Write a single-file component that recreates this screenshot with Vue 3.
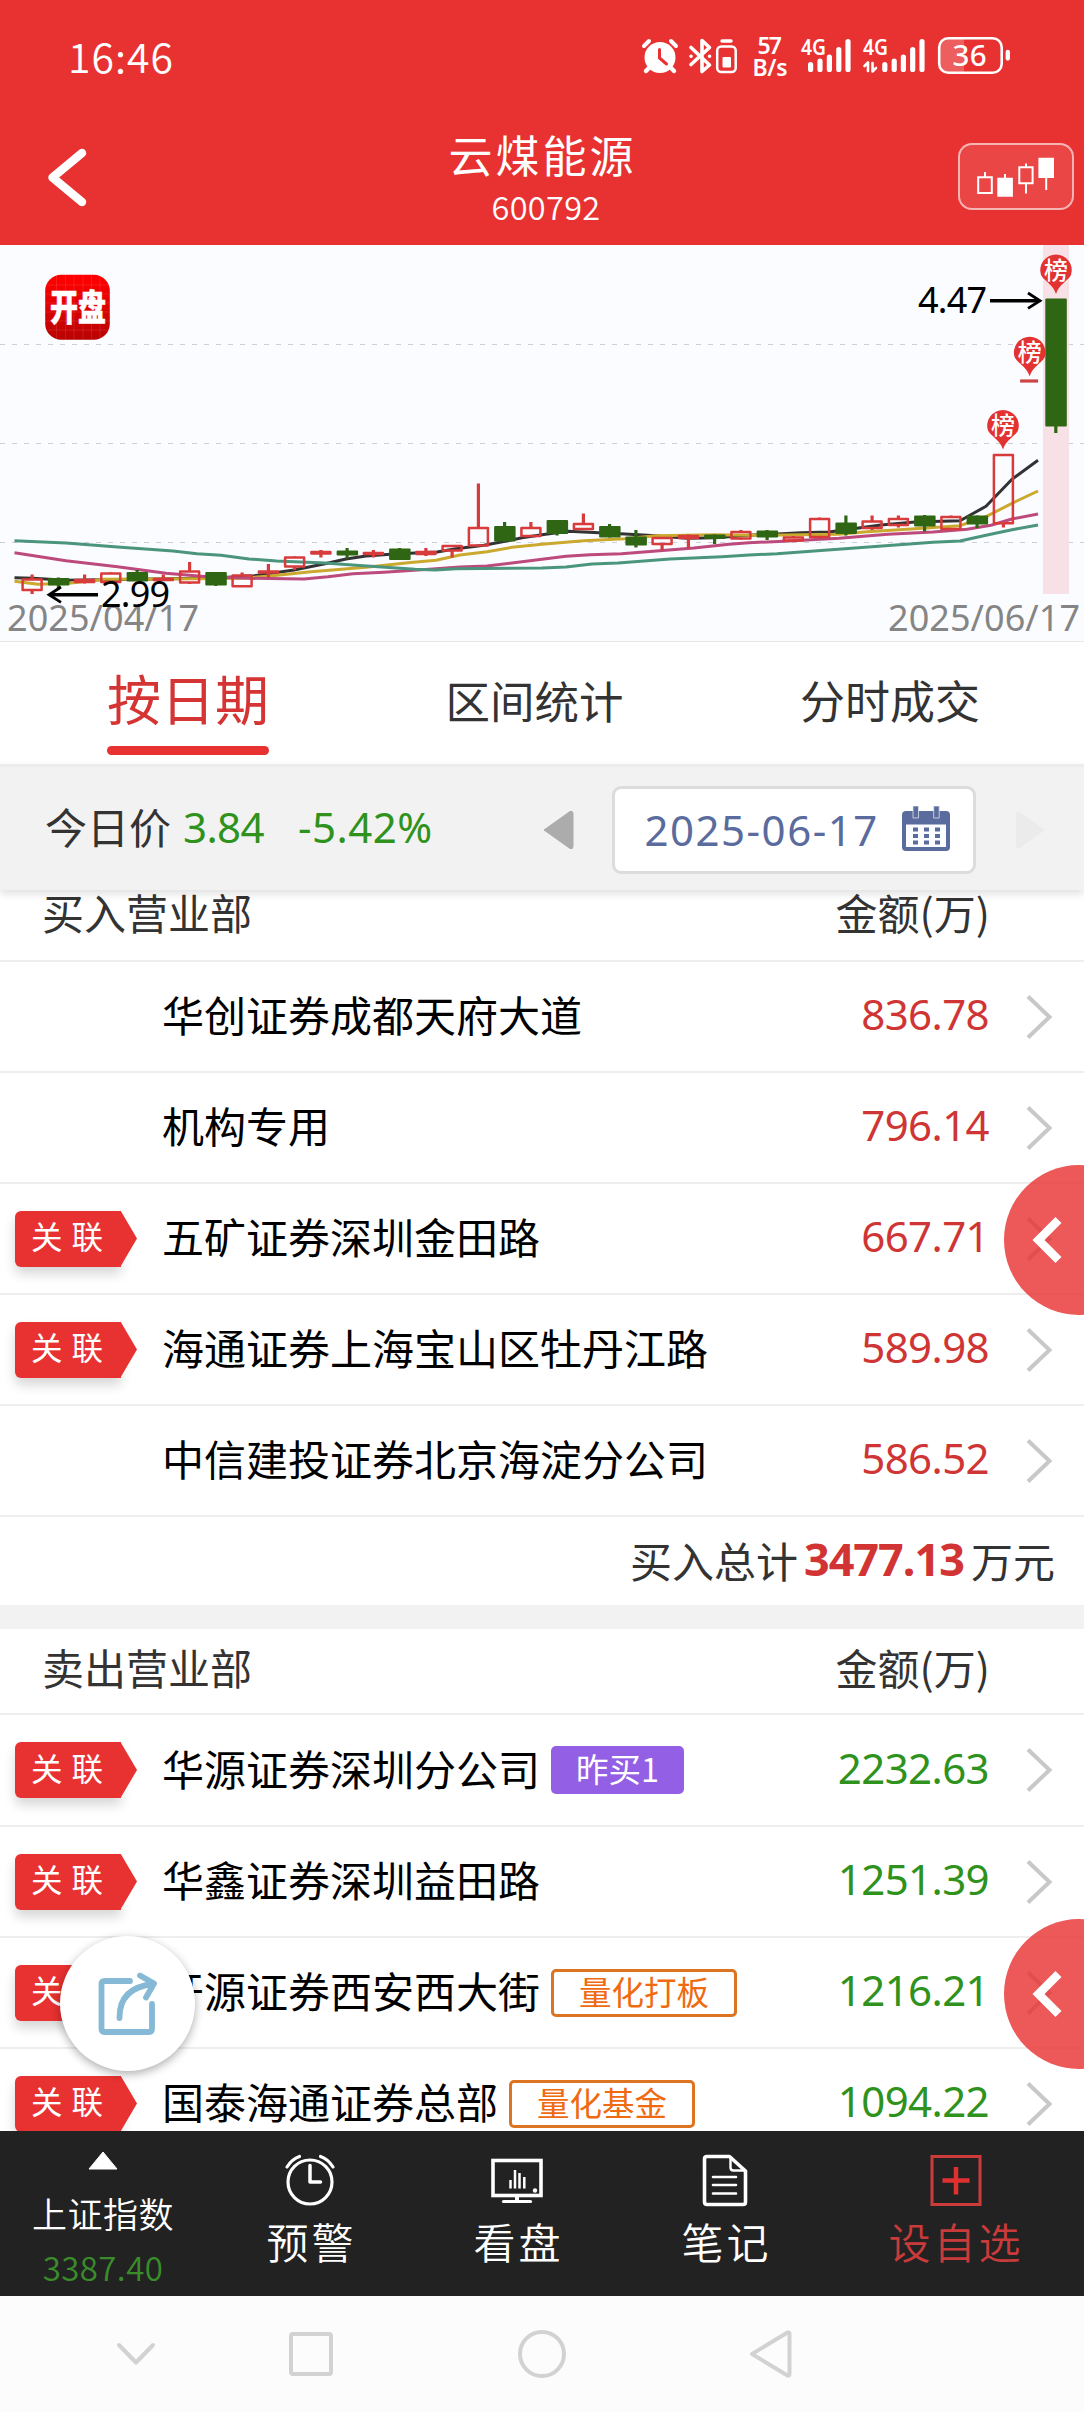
<script setup>
// Chart geometry: 40 daily candles, evenly spaced.
const STEP = 26.25
const FIRST = 32.1
const raw = [
  ['r', 334.5, 345, 329.5, 349], ['g', 334, 339.5, 332.5, 344.5], ['r', 335, 337, 329.5, 338.5], ['r', 328.5, 337, 327.5, 337],
  ['g', 328, 335.5, 325, 335.5], ['r', 334, 335, 329.5, 336], ['r', 326.5, 337.5, 317, 339], ['g', 328, 339.5, 327.5, 341],
  ['r', 330.5, 341.3, 327.5, 341], ['r', 326.5, 327.5, 319, 332.5], ['r', 312.5, 321.5, 311.5, 325], ['r', 307, 308.5, 305, 312.5],
  ['g', 306.5, 309.5, 303, 313.5], ['r', 308, 309, 305, 312.5], ['g', 304.5, 314, 303, 315], ['r', 307, 309, 303, 311],
  ['r', 301, 305.5, 300, 312.5], ['r', 283, 300.5, 238.5, 300.5], ['g', 282, 295.5, 277, 296.5], ['r', 283, 291, 277, 291],
  ['g', 276, 288, 276, 290.5], ['r', 279, 284, 268.5, 285], ['g', 282, 291.5, 279, 292.5], ['g', 292.5, 299.5, 285, 302.5],
  ['r', 293, 299, 292, 305], ['r', 291, 293, 289.5, 303.5], ['g', 290.5, 293, 289.5, 299], ['r', 287, 293.5, 285, 294.5],
  ['g', 286.5, 291.5, 285, 295], ['r', 292.5, 295.5, 291, 296.5], ['r', 274, 292, 272.5, 293.5], ['g', 278.5, 288, 270.5, 290.5],
  ['r', 276.5, 283, 270.5, 285], ['r', 274, 280, 270.5, 282.5], ['g', 271.5, 280.5, 270, 286.5], ['r', 272, 284, 270.5, 285],
  ['g', 271.5, 278.5, 270.5, 283], ['r', 210, 278.3, 210, 282.5], ['f', 136, 136, 136, 136], ['g', 54.5, 180.5, 54.5, 188],
]
const candles = raw.map(([kind, top, bottom, high, low], i) => ({ kind, top, bottom, high, low, x: +(FIRST + i * STEP).toFixed(1) }))

const averages = [
  { color: '#333333', points: '14.5,332.7 33,333.3 66,335.3 138,334.3 214,333 254,330.7 294,325 325,318.7 346,314 366,311 394,309 437,307 456,303.7 484,300.3 505,296.3 522,292.7 542,289.7 568,286.3 599,287.7 625,289 656,290.7 687,293.3 715,292.7 749,290.3 801,287.7 829,287 853,283.7 881,280 915,277 960,275.7 986,261.3 1012,234.3 1038,215.3' },
  { color: '#cba92f', points: '14.5,336.3 38,339.3 69,338.3 104,334.3 166,334 242,333.3 270,331 311,326.7 366,322.3 408,317.7 436,315.3 460,310 487,306.7 512,302.3 542,299.3 583.5,295.7 625,293.7 656,290.7 715,289.7 749,290.3 784,290 839,289.3 867,286.7 915,283.7 960,280.7 986,271.7 1012,258.3 1038,246' },
  { color: '#bd4a7c', points: '14.5,307.7 66,315.7 117.5,321.7 166,328.3 207,331.7 249,333.3 304,334 328,331.7 353,328.7 384,327.3 429,324.3 460,322 487,321 512,318 542,314.3 566,311.3 590,309.7 621.5,308.7 659.5,305.7 694,303 729,299.3 749,297.7 784,296.3 839,293.3 888,289.3 933,287 967,284.3 991,280.3 1012,274 1038,269' },
  { color: '#4b957c', points: '14.5,295.7 66,298 117.5,302 173,306 197,308.7 221,310.3 249,314 276.5,316 325,318 356,320.3 415,324.3 435.5,325 456,323.7 542,323 566,322 592,319 618,318 670,314 722,311.7 749,310 777,308.7 933,297.3 960,296 986,290.3 1012,284.7 1038,280' },
]
const pins = [{ x: 1056, y: 25 }, { x: 1029.7, y: 107.3 }, { x: 1003, y: 180.5 }]

const buyers = [
  { name: '华创证券成都天府大道', amount: '836.78' },
  { name: '机构专用', amount: '796.14' },
  { name: '五矿证券深圳金田路', amount: '667.71', linked: true },
  { name: '海通证券上海宝山区牡丹江路', amount: '589.98', linked: true },
  { name: '中信建投证券北京海淀分公司', amount: '586.52' },
]
const sellers = [
  { name: '华源证券深圳分公司', amount: '2232.63', linked: true, badge: '昨买1', tone: 'purple' },
  { name: '华鑫证券深圳益田路', amount: '1251.39', linked: true },
  { name: '开源证券西安西大街', amount: '1216.21', linked: true, badge: '量化打板', tone: 'orange' },
  { name: '国泰海通证券总部', amount: '1094.22', linked: true, badge: '量化基金', tone: 'orange' },
]
const groups = [
  { key: 'buy', title: '买入营业部', rows: buyers, total: '3477.13' },
  { key: 'sell', title: '卖出营业部', rows: sellers },
]
</script>

<template>
  <div class="screen">
    <header class="header">
      <div class="status">
        <span class="clock">16:46</span>
        <svg class="status-icons" width="380" height="50" viewBox="636 31 380 50">
          <g stroke="#fff" stroke-linecap="round" fill="none">
            <circle cx="660" cy="57.5" r="15.5" fill="#fff" stroke="none" />
            <path d="M644 46l5-5M676 46l-5-5" stroke-width="4" />
            <path d="M650 67l-4 4M670 67l4 4" stroke-width="4.5" />
            <path d="M659.5 49.500v8.500l7 6" stroke="#e83131" stroke-width="3" />
            <path d="M691 47.500l18.500 17.500-7.500 6.500v-31l7.500 7-18.500 17" stroke-width="3.600" stroke-linejoin="round" />
            <path d="M691 56.200h.1M709.500 56.200h.1" stroke-width="3.500" />
            <rect x="717.200" y="46.500" width="18.500" height="25.500" rx="4" stroke-width="2.500" />
            <path d="M722 41h9" stroke-width="3.400" />
            <rect x="722.500" y="57" width="8.500" height="10.500" rx="1" fill="#fff" stroke="none" />
            <path d="M810.600 64.500v5M820 61v8.500M829.400 57v12.500M838.800 49.500v20M848 41.500v28" stroke-width="5.200" />
            <path d="M884.800 64.500v5M894.200 61v8.500M903.400 57v12.500M912.700 49.500v20M922 41.500v28" stroke-width="5.200" />
            <path d="M864.500 66l3.500-3.500v8.500M872.500 63v8.500l3.500-3.500" stroke-width="2.600" stroke-linejoin="round" />
            <path d="M948 39h16v34h-16a8 8 0 0 1-8-8v-18a8 8 0 0 1 8-8z" fill="rgba(255,255,255,.22)" stroke="none" />
            <rect x="939.200" y="38.200" width="62.500" height="34.500" rx="9" stroke-width="2.600" />
            <path d="M1007.800 52v6.500" stroke-width="4.300" />
          </g>
          <g fill="#fff" class="status-text">
            <text x="757.500" y="54" font-size="23" textLength="24.500">57</text>
            <text x="752.500" y="75.500" font-size="23" textLength="35">B/s</text>
            <text x="801" y="55" font-size="22" textLength="25" lengthAdjust="spacingAndGlyphs">4G</text>
            <text x="863" y="55" font-size="22" textLength="25" lengthAdjust="spacingAndGlyphs">4G</text>
            <text x="952.500" y="65.500" font-size="29.500" textLength="34">36</text>
          </g>
        </svg>
      </div>
      <div class="titlebar">
        <svg class="back" width="46" height="64" viewBox="44 145 46 64"><path d="M82 153L52.500 177.500 82 202" fill="none" stroke="#fff" stroke-width="8.500" stroke-linecap="round" stroke-linejoin="round" /></svg>
        <div class="stock">
          <h1>云煤能源</h1>
          <span>600792</span>
        </div>
        <div class="kline">
          <svg width="82" height="42" viewBox="976 156 82 42" fill="none" stroke="#fff" stroke-width="2">
            <path d="M979.200 177.300h13.600v15.700h-13.600zM986 177v-5M1020.300 167.300h13.300v15.900h-13.300zM1027 167v-3.500M1027 183.500v10" />
            <path d="M999.300 178.800h13.600v16.900h-13.600zM1040.400 158.700h13.600v18.300h-13.600z" fill="#fff" />
            <path d="M1006 178v-4M1047.200 177v13" />
          </svg>
        </div>
      </div>
    </header>

    <svg class="chart" width="1084" height="396" viewBox="0 0 1084 396">
      <defs>
        <linearGradient id="logo" x1="0" y1="0" x2="0" y2="1"><stop offset=".1" stop-color="#fc0000" /><stop offset="1" stop-color="#b80303" /></linearGradient>
      </defs>
      <path d="M0 99.500h1084M0 198.500h1084M0 297.500h1084" stroke="#cdcfd6" stroke-dasharray="5 7" />
      <rect x="1043" y="0" width="26" height="349" fill="#f7e0e6" />
      <rect x="45.200" y="29.700" width="64.600" height="65" rx="16" fill="url(#logo)" />
      <path d="M56.500 30v64.500M65.500 30v64.500M74 30v64.500M83 30v64.500M91.500 30v64.500M100 30v64.500M45.500 40h64M45.500 49h64M45.500 58h64M45.500 67h64M45.500 76h64M45.500 85h64" stroke="#fff" stroke-opacity=".1" />
      <text class="logo-text" x="50" y="76" font-size="36" textLength="56" lengthAdjust="spacingAndGlyphs">开盘</text>
      <polyline v-for="a in averages" :key="a.color" :points="a.points" fill="none" :stroke="a.color" stroke-width="3" stroke-linejoin="round" />
      <g v-for="c in candles" :key="c.x">
        <template v-if="c.kind === 'r'">
          <path :d="`M${c.x} ${c.high}V${c.top}M${c.x} ${c.bottom}V${c.low}`" stroke="#d83b3b" stroke-width="3.200" />
          <rect :x="c.x - 9.500" :y="c.top" width="19" :height="c.bottom - c.top" fill="none" stroke="#d83b3b" stroke-width="2.500" stroke-linejoin="round" />
        </template>
        <template v-else-if="c.kind === 'g'">
          <path :d="`M${c.x} ${c.high}V${c.low}`" stroke="#2f6613" stroke-width="3.200" />
          <rect :x="c.x - 9.500" :y="c.top" width="19.500" :height="c.bottom - c.top" fill="#2f6613" stroke="#2f6613" stroke-width="2" stroke-linejoin="round" />
        </template>
        <path v-else :d="`M${c.x - 9.500} ${c.top}h18`" stroke="#cf4447" stroke-width="3.200" />
      </g>
      <g v-for="p in pins" :key="p.x">
        <path :d="`M${p.x - 15} ${p.y + 5}a15.800 15.600 0 1 1 30 0c-2 5-12 9-15 19c-3-10-13-14-15-19z`" fill="#e23332" />
        <text class="pin-text" :x="p.x" :y="p.y + 8.800" text-anchor="middle">榜</text>
      </g>
      <g class="chart-text" font-size="36">
        <text x="918" y="67.700" textLength="69">4.47</text>
        <text x="7" y="385.700" fill="#858585" textLength="192">2025/04/17</text>
        <text x="888" y="385.700" fill="#858585" textLength="192">2025/06/17</text>
        <text x="101" y="362" textLength="69">2.99</text>
      </g>
      <g fill="none" stroke="#000">
        <path d="M990 55.700h49M50 349.700h48" stroke-width="3.600" />
        <path d="M1028 48l12 7.700-12 7.700M61 342l-12 7.700 12 7.700" stroke-width="2.800" />
      </g>
    </svg>

    <nav class="tabs">
      <span class="tab active">按日期</span>
      <span class="tab">区间统计</span>
      <span class="tab last">分时成交</span>
    </nav>

    <section class="quote">
      <span class="label">今日价</span>
      <span class="num price">3.84</span>
      <span class="num change">-5.42%</span>
      <svg class="prev" width="32" height="42" viewBox="0 0 32 42"><path d="M2 21L28 2.500q3-1 3 2v33q0 3-3 2z" fill="#acacac" stroke="#acacac" stroke-linejoin="round" /></svg>
      <div class="date">
        <span class="num">2025-06-17</span>
        <svg width="48" height="46" viewBox="0 0 48 46">
          <rect y="5" width="48" height="40" rx="4" fill="#5a6b9d" />
          <path d="M4 18.500h40v22.500h-40z" fill="#fafcff" />
          <path d="M11 0h5.500v12h-5.500zM31.700 0h5.500v12h-5.500z" fill="#5a6b9d" stroke="#dfe3ee" stroke-width=".8" />
          <path d="M11 21.500h5v4h-5zm11 0h5v4h-5zm11 0h5v4h-5zM11 28h5v4h-5zm11 0h5v4h-5zm11 0h5v4h-5zM11 34.500h5v4h-5zm11 0h5v4h-5zm11 0h5v4h-5z" fill="#5a6b9d" />
        </svg>
      </div>
      <svg class="next" width="32" height="42" viewBox="0 0 32 42"><path d="M30 21L4 2.500q-3-1-3 2v33q0 3 3 2z" fill="#ebebeb" /></svg>
    </section>

    <main class="list">
      <section v-for="g in groups" :key="g.key" :class="g.key">
        <div class="head"><span>{{ g.title }}</span><span>金额(万)</span></div>
        <div v-for="r in g.rows" :key="r.name" class="row">
          <div class="tag-cell"><span v-if="r.linked" class="tag">关联</span></div>
          <span class="name">{{ r.name }}</span>
          <span v-if="r.badge" class="badge" :class="r.tone">{{ r.badge }}</span>
          <span class="num amount">{{ r.amount }}</span>
          <svg width="28" height="48" viewBox="0 0 28 48"><path d="M3 3.500L24.500 24 3 44.500" fill="none" stroke="#c8c8c8" stroke-width="4" /></svg>
        </div>
        <div v-if="g.total" class="total"><span>买入总计</span><b>{{ g.total }}</b><span>万元</span></div>
      </section>
    </main>

    <footer class="toolbar">
      <div class="item index">
        <svg width="30" height="19" viewBox="0 0 30 19"><path d="M15 1L29 18H1z" fill="#fff" stroke="#fff" stroke-linejoin="round" /></svg>
        <span>上证指数</span>
        <em>3387.40</em>
      </div>
      <div class="item">
        <svg width="52" height="54" viewBox="0 0 52 54" fill="none" stroke="#fff" stroke-width="3.200" stroke-linecap="round"><circle cx="26" cy="29" r="22" /><path d="M3 14Q8 6 15.500 3.500M49 14Q44 6 36.500 3.500" /><path d="M26 12.500V29h10.500" stroke-width="3.500" stroke-linejoin="round" /></svg>
        <span>预警</span>
      </div>
      <div class="item">
        <svg width="52" height="54" viewBox="0 0 52 54" fill="none" stroke="#fff"><rect x="2" y="7.500" width="48" height="35" stroke-width="3.600" /><path d="M26 43v5" stroke-width="4" /><path d="M12.500 48.500h27" stroke-width="3.200" stroke-linecap="round" /><path d="M19.500 27v8.500M24 17v18.500M28.500 20v15.500M33.300 24v11.500" stroke-width="2.500" /><circle cx="44" cy="37.500" r="2.200" fill="#fff" stroke="none" /></svg>
        <span>看盘</span>
      </div>
      <div class="item">
        <svg width="52" height="54" viewBox="0 0 52 54" fill="none" stroke="#fff" stroke-width="3.600" stroke-linejoin="round"><path d="M8 3.500h22.500L46.500 18v31q0 2.500-2.500 2.500H8q-2.500 0-2.500-2.500V6q0-2.500 2.500-2.500z" /><path d="M31.500 4v10.500q0 3 3 3h11" stroke-width="2.400" /><path d="M14 24h23M14 32h23M14 40.500h23" stroke-width="2.600" stroke-linecap="round" /></svg>
        <span>笔记</span>
      </div>
      <div class="item add">
        <svg width="52" height="54" viewBox="0 0 52 54" fill="none"><rect x="2" y="3.500" width="48" height="48" stroke="#cc3a3a" stroke-width="3" /><path d="M26 14v27.500M12.500 27.500h27" stroke="#e03030" stroke-width="4.500" /></svg>
        <span>设自选</span>
      </div>
    </footer>

    <div class="sysnav">
      <svg width="1084" height="60" viewBox="0 2324 1084 60" fill="none" stroke="#d2d2d2" stroke-width="4" stroke-linecap="round" stroke-linejoin="round">
        <path d="M119 2345l17 17.500 17-17.500" />
        <rect x="291" y="2334" width="40" height="40" rx="2" />
        <circle cx="542" cy="2354" r="22" />
        <path d="M752 2354l35.500-21.500q2-.5 2 1.500v40q0 2-2 1.500z" />
      </svg>
    </div>

    <div class="side first"><svg width="32" height="48" viewBox="0 0 32 48"><path d="M27.500 4L7.500 24l20 20" fill="none" stroke="#fff" stroke-width="8.500" /></svg></div>
    <div class="side second"><svg width="32" height="48" viewBox="0 0 32 48"><path d="M27.500 4L7.500 24l20 20" fill="none" stroke="#fff" stroke-width="8.500" /></svg></div>
    <div class="share">
      <svg width="60" height="64" viewBox="0 0 60 64" fill="none" stroke="#85b9d5" stroke-width="5.800" stroke-linecap="round" stroke-linejoin="round"><path d="M32 9H7q-3.500 0-3.500 3.500v44q0 3.500 3.500 3.500h43.500q3.500 0 3.500-3.500V32" /><path d="M21.500 46Q21 16 55 12M42 3.500L56 11.500 48 25.500" /></svg>
    </div>
  </div>
</template>

<style>
body { margin: 0; }
</style>

<style scoped>
.screen { position: relative; width: 1084px; height: 2412px; overflow: hidden; background: #fff; color: #333; font-family: "Noto Sans", "Noto Sans CJK SC", sans-serif; font-size: 42px; display: flex; flex-direction: column; }
.screen > * { flex-shrink: 0; }
.num { font-family: "Noto Sans", sans-serif; letter-spacing: -0.6px; }
.header { height: 245px; background: #e83131; color: #fff; box-sizing: border-box; }
.status { height: 110px; display: flex; align-items: flex-start; justify-content: space-between; padding: 31px 68px 0 68px; box-sizing: border-box; }
.clock { font-family: "Noto Sans CJK SC", sans-serif; font-size: 41px; line-height: 48px; letter-spacing: 1px; font-weight: 350; }
.status-text { font-family: "Noto Sans", sans-serif; font-weight: 600; }
.status-text text:last-child { font-weight: 500; }
.titlebar { height: 133px; display: grid; grid-template-columns: 130px 1fr 130px; align-items: center; }
.back { margin-left: 44px; }
.stock { display: flex; flex-direction: column; align-items: center; font-family: "Noto Sans CJK SC", sans-serif; }
.stock h1 { margin: 0 -1px 0 0; font-size: 44px; line-height: 54px; font-weight: 400; letter-spacing: 3px; }
.stock span { font-size: 32.5px; line-height: 42px; margin-top: 4px; margin-left: 8px; letter-spacing: .3px; font-weight: 350; }
.kline { width: 112px; height: 63px; border: 2px solid rgba(255, 255, 255, .6); border-radius: 14px; background: rgba(255, 255, 255, .1); margin-left: 4px; display: flex; align-items: center; justify-content: center; }
.chart { display: block; background: #fbfcff; }
.logo-text { font-family: "Noto Sans CJK SC", sans-serif; font-weight: 900; fill: #fff; stroke: #fff; stroke-width: .6px; }
.pin-text { font-family: "Noto Sans CJK SC", sans-serif; font-size: 24px; font-weight: 500; fill: #fff; }
.chart-text { font-family: "Noto Sans", sans-serif; }
.tabs { height: 123px; box-sizing: border-box; border-top: 1px solid #e8e8e8; display: flex; justify-content: center; gap: 176.5px; font-family: "Noto Sans CJK SC", sans-serif; padding-left: 3px; }
.tab { font-size: 44.500px; line-height: 116px; }
.tab.last { font-size: 45px; }
.tab.active { position: relative; height: 113px; font-size: 54px; line-height: 112px; color: #d43434; }
.tab.active::after { content: ""; position: absolute; left: 0; right: 0; bottom: 0; height: 9px; border-radius: 5px; background: #e83131; }
.quote { height: 126px; box-sizing: border-box; border-top: 3px solid #ececec; background: #f2f2f2; box-shadow: 0 4px 8px rgba(0, 0, 0, .12); display: flex; align-items: center; position: relative; z-index: 2; }
.quote .label { margin-left: 45px; width: 138px; padding-bottom: 6px; }
.quote .price { width: 115px; color: #2f921c; padding-bottom: 5px; }
.quote .change { width: 244px; color: #2f921c; padding-bottom: 5px; letter-spacing: .5px; }
.prev, .next { margin-top: 3px; }
.date { width: 364px; height: 88px; box-sizing: border-box; border: 3px solid #dcdcdc; border-radius: 9px; background: #fff; margin-left: 37.500px; margin-top: 3px; display: flex; align-items: center; justify-content: space-between; padding: 0 23px 0 30px; color: #5a6b9d; }
.date .num { letter-spacing: 1.500px; padding-bottom: 1px; }
.date svg { margin-top: -3px; }
.next { margin-left: 39px; }
.list { height: 1241px; overflow: hidden; font-family: "Noto Sans CJK SC", sans-serif; }
.head { display: flex; justify-content: space-between; align-items: center; padding: 0 94px 0 42px; height: 72px; border-bottom: 2px solid #eee; box-sizing: border-box; line-height: 42px; }
.buy .head { padding-bottom: 27px; }
.sell .head { height: 86px; padding-bottom: 9px; }
.row { height: 111px; box-sizing: border-box; border-bottom: 2px solid #eee; display: flex; align-items: center; color: #000; padding-right: 31px; }
.sell .head + .row { height: 112px; }
.tag-cell { width: 162px; padding-left: 15px; box-sizing: border-box; }
.tag { position: relative; display: flex; align-items: center; width: 106px; height: 56px; box-sizing: border-box; padding: 0 0 7px 16px; background: #e83131; border-radius: 6px 0 0 6px; box-shadow: 0 7px 12px rgba(0, 0, 0, .16); color: #fff; font-size: 31.500px; letter-spacing: 9px; white-space: nowrap; }
.tag::after { content: ""; position: absolute; left: 105.500px; top: 0; width: 16.500px; height: 56px; background: #e83131; clip-path: polygon(0 0, 100% 50%, 0 100%); }
.name { padding-bottom: 6px; white-space: nowrap; }
.badge { margin-left: 11px; height: 48px; box-sizing: border-box; border-radius: 5px; padding: 0 25px 3px; font-size: 32.500px; line-height: 44px; }
.purple { background: #9360e5; color: #fff; }
.orange { border: 3px solid #dd7422; color: #ef6a10; line-height: 38px; }
.amount { margin-left: auto; color: #cf3535; padding-bottom: 6px; }
.sell .amount { color: #2f921c; }
.row svg { margin-left: 36px; }
.total { height: 112px; box-sizing: border-box; border-bottom: 24px solid #f2f2f2; display: flex; align-items: center; justify-content: flex-end; padding: 0 29px 4px 0; }
.total b { font-family: "Noto Sans", sans-serif; font-size: 45px; line-height: 50px; letter-spacing: -1px; color: #d23434; margin: 0 7px 0 6px; }
.toolbar { height: 165px; box-sizing: border-box; background: #222; color: #fff; font-family: "Noto Sans CJK SC", sans-serif; display: grid; grid-template-columns: 206px 208px 206px 210px 252px; position: relative; z-index: 1; }
.item { display: flex; flex-direction: column; align-items: center; padding-top: 22px; }
.item span { font-size: 42px; line-height: 50px; letter-spacing: 3px; margin-right: -3px; margin-top: 9px; font-weight: 350; }
.index { padding-top: 20px; }
.index span { font-size: 35px; letter-spacing: .5px; margin-top: 19px; line-height: 48px; margin-right: 0; }
.index em { font-style: normal; font-size: 33px; line-height: 48px; letter-spacing: .4px; color: #3a8c2b; margin-top: 6px; font-weight: 350; }
.add span { color: #c93b3b; margin-right: 0; }
.sysnav { height: 116px; background: #fcfcfc; padding-top: 28px; box-sizing: border-box; }
.sysnav svg { display: block; }
.side { position: absolute; left: 1004px; width: 150px; height: 150px; border-radius: 50%; background: rgba(232, 46, 46, .8); z-index: 3; display: flex; align-items: center; padding-left: 27px; box-sizing: border-box; }
.first { top: 1165px; }
.second { top: 1919px; }
.share { position: absolute; left: 60px; top: 1936px; width: 135px; height: 135px; border-radius: 50%; background: #fff; box-shadow: 0 3px 10px rgba(0, 0, 0, .32); z-index: 3; display: flex; align-items: center; justify-content: center; }
</style>
